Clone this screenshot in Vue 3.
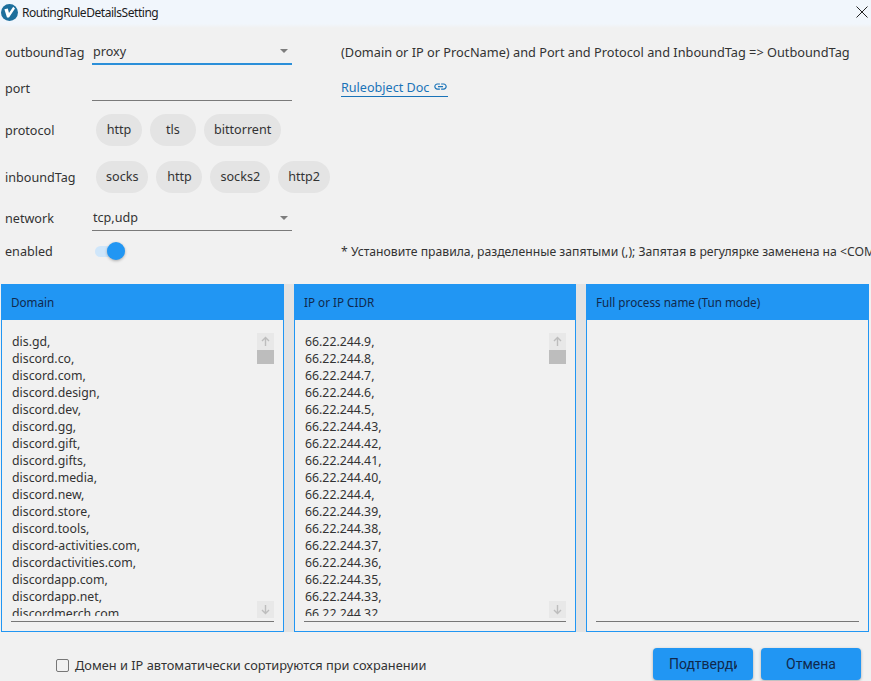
<script setup>
const protocols = ['http', 'tls', 'bittorrent']
const inboundTags = ['socks', 'http', 'socks2', 'http2']

const domains = [
  'dis.gd,', 'discord.co,', 'discord.com,', 'discord.design,', 'discord.dev,', 'discord.gg,',
  'discord.gift,', 'discord.gifts,', 'discord.media,', 'discord.new,', 'discord.store,', 'discord.tools,',
  'discord-activities.com,', 'discordactivities.com,', 'discordapp.com,', 'discordapp.net,', 'discordmerch.com'
]

const ips = [
  '66.22.244.9,', '66.22.244.8,', '66.22.244.7,', '66.22.244.6,', '66.22.244.5,', '66.22.244.43,',
  '66.22.244.42,', '66.22.244.41,', '66.22.244.40,', '66.22.244.4,', '66.22.244.39,', '66.22.244.38,',
  '66.22.244.37,', '66.22.244.36,', '66.22.244.35,', '66.22.244.33,', '66.22.244.32'
]

const panels = [
  { title: 'Domain', lines: domains },
  { title: 'IP or IP CIDR', lines: ips },
  { title: 'Full process name (Tun mode)', lines: [] }
]
</script>

<template>
  <div class="window">
    <header class="titlebar">
      <svg class="logo" width="17" height="17" viewBox="0 0 17 17">
        <circle cx="8.5" cy="8.5" r="8.5" fill="#1d6f9c" />
        <path d="M3.4 5.2 L6.8 4.6 L8 9 L12.2 2.8 L14 4.4 L8 13.6 L6 13.6 Z" fill="#fff" />
      </svg>
      <span class="window-title">RoutingRuleDetailsSetting</span>
      <svg class="close" width="12" height="12" viewBox="0 0 12 12">
        <path d="M0.5 0.5 L11.5 11.5 M11.5 0.5 L0.5 11.5" stroke="#222" stroke-width="1" fill="none" />
      </svg>
    </header>

    <section class="form">
      <div class="row row-outbound">
        <label class="label">outboundTag</label>
        <div class="select focused">
          <span>proxy</span>
          <i class="caret"></i>
        </div>
        <p class="hint">(Domain or IP or ProcName) and Port and Protocol and InboundTag =&gt; OutboundTag</p>
      </div>

      <div class="row row-port">
        <label class="label">port</label>
        <div class="select"></div>
        <a class="doc-link">
          Ruleobject Doc
          <svg width="15" height="15" viewBox="0 0 24 24" fill="#1a73b8">
            <path d="M3.9 12c0-1.71 1.39-3.1 3.1-3.1h4V7H7c-2.76 0-5 2.24-5 5s2.24 5 5 5h4v-1.9H7c-1.71 0-3.1-1.39-3.1-3.1zM8 13h8v-2H8v2zm9-6h-4v1.9h4c1.71 0 3.1 1.39 3.1 3.1s-1.39 3.1-3.1 3.1h-4V17h4c2.76 0 5-2.24 5-5s-2.24-5-5-5z" />
          </svg>
        </a>
      </div>

      <div class="row row-protocol">
        <label class="label">protocol</label>
        <div class="chips">
          <span v-for="chip in protocols" :key="chip" class="chip">{{ chip }}</span>
        </div>
      </div>

      <div class="row row-inbound">
        <label class="label">inboundTag</label>
        <div class="chips">
          <span v-for="chip in inboundTags" :key="chip" class="chip">{{ chip }}</span>
        </div>
      </div>

      <div class="row row-network">
        <label class="label">network</label>
        <div class="select">
          <span>tcp,udp</span>
          <i class="caret"></i>
        </div>
      </div>

      <div class="row row-enabled">
        <label class="label">enabled</label>
        <div class="toggle"><span class="thumb"></span></div>
        <p class="hint note">* Установите правила, разделенные запятыми (,); Запятая в регулярке заменена на &lt;COMMA&gt;</p>
      </div>
    </section>

    <section class="panels">
      <article v-for="panel in panels" :key="panel.title" class="panel">
        <h3 class="panel-head">{{ panel.title }}</h3>
        <div class="editor">
          <div class="lines">
            <div v-for="line in panel.lines" :key="line">{{ line }}</div>
          </div>
          <div v-if="panel.lines.length" class="scrollbar">
            <span class="arrow">
              <svg width="11" height="11" viewBox="0 0 11 11"><path d="M5.5 10 V1.5 M2 5 L5.5 1.5 L9 5" stroke="#bdbdbd" stroke-width="1.4" fill="none" /></svg>
            </span>
            <span class="scroll-thumb"></span>
            <span class="scroll-space"></span>
            <span class="arrow">
              <svg width="11" height="11" viewBox="0 0 11 11"><path d="M5.5 1 V9.5 M2 6 L5.5 9.5 L9 6" stroke="#bdbdbd" stroke-width="1.4" fill="none" /></svg>
            </span>
          </div>
        </div>
      </article>
    </section>

    <footer class="footer">
      <label class="check">
        <span class="box"></span>
        Домен и IP автоматически сортируются при сохранении
      </label>
      <div class="actions">
        <button class="btn"><span class="btn-text">Подтвердить</span></button>
        <button class="btn"><span class="btn-text center">Отмена</span></button>
      </div>
    </footer>
  </div>
</template>

<style scoped>
.window {
  width: 871px;
  height: 681px;
  overflow: hidden;
  background: #f1f1f1;
  color: #333;
  font-family: "Noto Sans", "Open Sans", sans-serif;
  font-size: 12.6px;
}

.titlebar {
  height: 28px;
  display: flex;
  align-items: center;
  padding: 0 3px 4px 1px;
  background: linear-gradient(#f1f6fc 85%, #f1f1f1);
  box-sizing: border-box;
}

.logo {
  flex: none;
  margin-right: 4px;
}

.window-title {
  font-size: 12px;
  letter-spacing: -0.45px;
  color: #1c1c1c;
}

.close {
  margin-left: auto;
}

.form {
  padding: 8px 0 0 5px;
}

.row {
  height: 32px;
  display: flex;
  align-items: center;
  white-space: nowrap;
}

.row-port { margin-top: 4px; }
.row-protocol { margin-top: 10px; }
.row-inbound { margin-top: 15px; }
.row-network { margin-top: 9px; }
.row-enabled { margin-top: 1px; }

.label {
  width: 87px;
  flex: none;
}

.select {
  width: 200px;
  height: 32px;
  flex: none;
  box-sizing: border-box;
  border-bottom: 1px solid #7a7a7a;
  display: flex;
  align-items: center;
  justify-content: space-between;
  padding: 6px 4px 0 1px;
  position: relative;
  top: -3px;
}

.select.focused {
  border-bottom: 2px solid #2b8fd9;
}

.caret {
  width: 0;
  height: 0;
  border-left: 4px solid transparent;
  border-right: 4px solid transparent;
  border-top: 4px solid #7d7d7d;
}

.hint {
  margin: 0 0 0 49px;
  font-size: 12.75px;
}

.note {
  margin-left: 219px;
  font-size: 12.2px;
}

.doc-link {
  margin-left: 49px;
  color: #1a73b8;
  display: inline-flex;
  align-items: center;
  gap: 4px;
  border-bottom: 1px solid #1a73b8;
  line-height: 16px;
}

.doc-link svg {
  margin-top: -3px;
}

.chips {
  display: flex;
  gap: 8px;
  margin-left: 4px;
}

.chip {
  height: 32px;
  min-width: 46px;
  box-sizing: border-box;
  line-height: 32px;
  padding: 0 10px;
  text-align: center;
  border-radius: 16px;
  background: #e4e4e4;
}

.toggle {
  flex: none;
  width: 27px;
  height: 11px;
  margin-left: 3px;
  border-radius: 6px;
  background: #cfe6fa;
  position: relative;
}

.thumb {
  position: absolute;
  right: -3px;
  top: -4px;
  width: 18px;
  height: 18px;
  border-radius: 50%;
  background: #2196f3;
  box-shadow: 0 1px 3px rgba(0, 0, 0, 0.3);
}

.panels {
  margin-top: 17px;
  padding-left: 1px;
  display: grid;
  grid-template-columns: 283px 282px 283px;
  column-gap: 10px;
  background: linear-gradient(#e3e3e3, #e3e3e3) no-repeat;
  background-size: 585px 100%;
  background-position: 1px 0;
}

.panel {
  height: 348px;
  box-sizing: border-box;
  border: 1px solid #2196f3;
  background: #f1f1f1;
  display: flex;
  flex-direction: column;
}

.panel-head {
  margin: 0;
  height: 35px;
  line-height: 35px;
  padding-left: 9px;
  background: #2196f3;
  color: #10294d;
  font-size: 11.7px;
  font-weight: 400;
}

.editor {
  height: 302px;
  margin: 0 9px;
  box-sizing: border-box;
  padding-top: 13px;
  border-bottom: 1px solid #777;
  position: relative;
  overflow: hidden;
}

.lines {
  height: 283px;
  overflow: hidden;
  padding-left: 1px;
  line-height: 17px;
  font-size: 12.3px;
}

.scrollbar {
  position: absolute;
  top: 13px;
  right: 0;
  bottom: 3px;
  width: 17px;
  display: flex;
  flex-direction: column;
}

.arrow {
  height: 17px;
  flex: none;
  background: #e8e8e8;
  display: flex;
  align-items: center;
  justify-content: center;
}

.scroll-thumb {
  height: 14px;
  flex: none;
  background: #bdbdbd;
}

.scroll-space {
  flex: 1;
}

.footer {
  height: 48px;
  display: flex;
  align-items: center;
  justify-content: space-between;
  padding: 16px 10px 0 56px;
  box-sizing: border-box;
}

.check {
  display: flex;
  align-items: center;
  gap: 6px;
  margin-top: 2px;
  font-size: 12.8px;
}

.box {
  width: 13px;
  height: 13px;
  box-sizing: border-box;
  border: 1.5px solid #777;
  border-radius: 2px;
}

.actions {
  display: flex;
  gap: 8px;
}

.btn {
  width: 100px;
  height: 32px;
  box-sizing: border-box;
  padding: 0 16px;
  border: none;
  border-radius: 4px;
  background: #2196f3;
  color: #10294d;
  font-family: Roboto, sans-serif;
  font-size: 14px;
  box-shadow: 0 1px 3px rgba(0, 0, 0, 0.3);
}

.btn-text {
  display: block;
  overflow: hidden;
  white-space: nowrap;
  text-align: left;
}

.btn-text.center {
  text-align: center;
}
</style>

<style>
body {
  margin: 0;
  background: #f1f1f1;
}
</style>
